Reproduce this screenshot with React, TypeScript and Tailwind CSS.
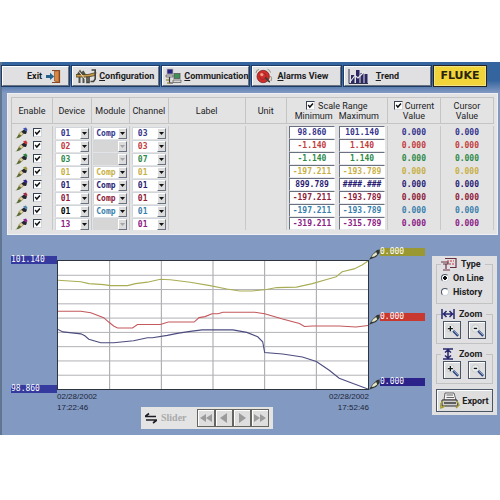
import { useState } from "react";
import type { ReactNode } from "react";

type Channel = {
  device: string;
  module: string;
  channel: string;
  min: string;
  max: string;
  text: string;
  deviceText?: string;
  brush: string;
};

const CHANNELS: Channel[] = [
  { device: "01", module: "Comp", channel: "03", min: "98.860", max: "101.140", text: "text-[#34348c]", brush: "#3c50b0" },
  { device: "02", module: "", channel: "03", min: "-1.140", max: "1.140", text: "text-[#c23c3c]", brush: "#d02c2c" },
  { device: "03", module: "", channel: "07", min: "-1.140", max: "1.140", text: "text-[#2e8a48]", brush: "#2c8040" },
  { device: "01", module: "Comp", channel: "01", min: "-197.211", max: "-193.789", text: "text-[#c8b044]", brush: "#98983c" },
  { device: "01", module: "Comp", channel: "01", min: "899.789", max: "####.###", text: "text-[#2a1c74]", brush: "#30208c" },
  { device: "01", module: "Comp", channel: "01", min: "-197.211", max: "-193.789", text: "text-[#8e2038]", brush: "#a02840" },
  { device: "01", module: "Comp", channel: "01", min: "-197.211", max: "-193.789", text: "text-[#3a80ac]", deviceText: "text-black", brush: "#5088b0" },
  { device: "13", module: "", channel: "01", min: "-319.211", max: "-315.789", text: "text-[#8a2084]", brush: "#902090" },
];

const TRACES = [
  {
    color: "#a9ad55",
    points:
      "0,19.5 23,21 31,23 46,24 53,25 70,25 78,23 90,21.5 103,18.5 113,19 133,21.5 153,25 170,28.5 183,30.5 195,30.5 210,29 220,27 240,26.5 256,23 273,18 280,16 286,11 298,8 306,4 312,0",
  },
  {
    color: "#c4585c",
    points:
      "0,51 23,51 33,52.5 46,57.5 51,62 56,66 60,68 75,68 80,64.5 103,64.5 111,62 137,62 142,57.5 148,56.5 155,53.5 161,53.5 166,52 198,52 208,53.5 226,59 243,63.5 248,66.5 256,66 283,66 300,67 312,65.5",
  },
  {
    color: "#4c4c80",
    points:
      "0,69.5 5,72 14,73 23,74 27,76 31,79.5 43,83 56,83 76,81 90,78 95,78 110,75.5 120,73.5 133,71.5 145,70 176,70 190,72.5 201,77 206,82 208,93 226,94.5 246,97.5 260,102 273,111 283,119 297,124.5 312,130",
  },
];

const TAGS = [
  { value: "0.000", bg: "bg-[#9a9832]" },
  { value: "0.000", bg: "bg-[#c8382f]" },
  { value: "0.000", bg: "bg-[#2b2389]" },
];

function Tick({ label }: { label: string }) {
  const [checked, setChecked] = useState(true);
  return (
    <span className="relative inline-block h-[9px] w-[9px] shrink-0">
      <input
        type="checkbox"
        aria-label={label}
        checked={checked}
        onChange={(e) => setChecked(e.target.checked)}
        className="block h-[9px] w-[9px] appearance-none border border-r-gray-300 border-b-gray-300 border-t-gray-700 border-l-gray-700 bg-white"
      />
      {checked && (
        <svg viewBox="0 0 8 8" className="pointer-events-none absolute inset-0 h-[9px] w-[9px]">
          <path d="M2 3.6 3.4 5.4 6.2 2.2" fill="none" stroke="#111" strokeWidth="1.3" />
        </svg>
      )}
    </span>
  );
}

function Drop({ value, label, text }: { value: string; label: string; text: string }) {
  const off = value === "";
  return (
    <div className={`relative mx-auto h-3 w-[34px] border-t border-l border-gray-300 ${off ? "bg-[#d6d6d6]" : "bg-white"}`}>
      <select
        aria-label={label}
        disabled={off}
        defaultValue={value}
        className={`block h-full w-full appearance-none font-['DejaVu_Sans_Mono',monospace] text-[8px] leading-[11px] font-bold ${text} ${value.length > 2 ? "pl-[2px]" : "pl-[5px]"}`}
      >
        <option value={value}>{value}</option>
      </select>
      <span className="pointer-events-none absolute top-0 right-0 flex h-[11px] w-[9px] items-center justify-center border border-t-white border-l-white border-r-gray-500 border-b-gray-500 bg-[#dcdcdc]">
        <svg viewBox="0 0 5 3" className="h-[3px] w-[5px]">
          <path d="M0 0H5L2.5 3Z" fill={off ? "#a5a5a5" : "#111"} />
        </svg>
      </span>
    </div>
  );
}

function Brush({ color }: { color: string }) {
  return (
    <svg viewBox="0 0 13 12" className="h-3 w-[13px] shrink-0">
      <path d="M0 11.2C3 11 2 8.6 4.2 7L6.6 8.6C5 10.8 3 11.8 0 11.2Z" fill="#5b6a30" />
      <path d="M3.6 7 6.2 4.6 8.4 6.6 6.6 8.8Z" fill="#e0cf92" stroke="#6b6434" strokeWidth=".5" />
      <path d="M6.4 4.4 9 2.4 12 4.4 11 7 8.6 6.8Z" fill="#23262e" />
      <path d="M8 1.6 11 .4 12.6 3 11 4.6Z" fill={color} />
    </svg>
  );
}

function Pointer() {
  return (
    <svg viewBox="0 0 11 12" className="h-3 w-[11px] shrink-0">
      <path d="M0 11.8 3 7 8 2 10.8 1.4 10.6 5 7 9Z" fill="#33362f" />
      <path d="M2.4 9 4 6.4 7.2 4 8.2 6.4 5.4 8.6Z" fill="#e9ebc8" />
    </svg>
  );
}

function ToolButton({ icon, first, rest, className }: { icon: ReactNode; first: string; rest: string; className: string }) {
  return (
    <button
      className={`flex h-5 items-center whitespace-nowrap border border-t-white border-l-white border-r-gray-500 border-b-gray-500 bg-[#e0e0e2] text-[9px] leading-[12px] font-bold text-[#1c1c1c] outline outline-[#1d3c66] ${className}`}
    >
      {icon}
      <span>
        <span className="underline">{first}</span>
        {rest}
      </span>
    </button>
  );
}

function ExitIcon() {
  return (
    <svg viewBox="0 0 15 15" className="h-[15px] w-[15px]">
      <path d="M6 1.5H13.5V13.5H6" fill="none" stroke="#8b4a24" strokeWidth="1.2" />
      <path d="M8.5 2.2 13 1.5V13.5L8.5 12Z" fill="#d98742" stroke="#70401f" strokeWidth=".6" />
      <path d="M0 6H4V3.8L8.2 7.4 4 11V9H0Z" fill="#26648e" />
    </svg>
  );
}

function ConfigIcon() {
  return (
    <svg viewBox="0 0 21 16" className="h-4 w-[21px] shrink-0">
      <path d="M1 6 4 1.5 5.5 4 7.5 2.5 10 6.5H8.5V15H6.5V9H4.5V15H2.5V7Z" fill="#50504a" />
      <path d="M0 6.5H12L20 4.5 19 7.5 12 9H0Z" fill="#c69a48" stroke="#4c3c22" strokeWidth=".8" />
      <path d="M11 8.5V14.5H13V8.5M15.5 2H19.2V11L17.5 13.5H14.5" fill="none" stroke="#44423c" strokeWidth="1.6" />
      <path d="M3 3.5 9 11" stroke="#ebe4cc" strokeWidth="1" />
    </svg>
  );
}

function CommIcon() {
  return (
    <svg viewBox="0 0 17 17" className="h-[17px] w-[17px] shrink-0">
      <rect x="2" y="1" width="6" height="5" fill="#28257e" stroke="#b8b8b8" strokeWidth=".7" />
      <rect x="9" y="5.5" width="6" height="5" fill="#3c9256" stroke="#565656" strokeWidth=".8" />
      <path d="M1 7H8V9H1ZM8 12H16V14.5H8Z" fill="#d8d8d8" stroke="#555" strokeWidth=".7" />
      <path d="M4.5 9V15H8" fill="none" stroke="#3a3a3a" strokeWidth="1.2" />
      <path d="M1 12H4M2 15H4.5" stroke="#9c964c" strokeWidth="1.4" />
    </svg>
  );
}

function AlarmIcon() {
  return (
    <svg viewBox="0 0 18 17" className="h-[17px] w-[18px] shrink-0">
      <circle cx="8.2" cy="8.5" r="6.2" fill="#cf2e2b" stroke="#741a1a" strokeWidth=".7" />
      <circle cx="8" cy="8.3" r="3.2" fill="none" stroke="#8e1f1f" strokeWidth=".6" />
      <circle cx="6.8" cy="6.6" r="1.7" fill="#ee9b88" />
      <path d="M10 10C13 10 12 14 15 13.5" fill="none" stroke="#3f3f3f" strokeWidth="1.8" />
      <path d="M1 5Q1 2 4 1.5M12.5 1.2Q15 2 15.5 4.5M15.5 8Q17.5 10 16 13" fill="none" stroke="#807755" strokeWidth=".8" />
    </svg>
  );
}

function TrendIcon() {
  return (
    <svg viewBox="0 0 20 15" className="h-[15px] w-5 shrink-0">
      <path d="M1 0V14.5H20" fill="none" stroke="#333150" strokeWidth="1" />
      <path d="M3 6H6.5V14H3ZM8 1H11.5V14H8ZM12.5 4H15.5V14H12.5ZM16.5 5H19.5V14H16.5Z" fill="#2b2760" />
      <path d="M2 13 7 6.5 10 9 17 2" fill="none" stroke="#e6e6f0" strokeWidth="1.2" />
    </svg>
  );
}

function Magnifier({ plus }: { plus?: boolean }) {
  return (
    <svg viewBox="0 0 16 16" className="h-[15px] w-[15px]">
      <circle cx="5.8" cy="5.8" r="4" fill="#e9ecec" stroke="#c0c4c4" strokeWidth=".8" />
      <path d="M8.8 8.4 14 13.8" stroke="#2f467e" strokeWidth="2.6" />
      <path d="M9 8 14 13" stroke="#9db4da" strokeWidth=".9" />
      <path d={plus ? "M3 6H8.4M5.7 3.3V8.7" : "M4 5.8H7.6"} stroke="#181818" strokeWidth="1.4" />
    </svg>
  );
}

function Group({ title, icon, children }: { title: string; icon: ReactNode; children: ReactNode }) {
  return (
    <fieldset className="min-w-0 border border-[#c2c2c2] px-1 pb-1">
      <legend className="flex h-[14px] items-center gap-1 pr-1 text-[9px] leading-[14px] font-bold">
        {icon}
        {title}
      </legend>
      {children}
    </fieldset>
  );
}

function ZoomPair({ axis }: { axis: string }) {
  const cls = "flex h-[18px] w-[18px] items-center justify-center border border-gray-600 bg-[#dedede] shadow-[inset_1px_1px_0_#fff]";
  return (
    <div className="flex justify-between px-[2px]">
      <button className={cls} aria-label={`Zoom in ${axis}`}>
        <Magnifier plus />
      </button>
      <button className={cls} aria-label={`Zoom out ${axis}`}>
        <Magnifier />
      </button>
    </div>
  );
}

const SEEK = [
  { name: "First", d: "M7 1V9L1 5ZM13 1V9L7 5Z" },
  { name: "Previous", d: "M10 0V10L3 5Z" },
  { name: "Next", d: "M4 0V10L11 5Z" },
  { name: "Last", d: "M1 1V9L7 5ZM7 1V9L13 5Z" },
];

export default function App() {
  const [mode, setMode] = useState("On Line");
  const head = "border-r border-b border-[#c4c4c4] p-0 font-normal";
  const cell = "h-[13px] border-r border-[#c8c8c8] p-0";
  const mono = "font-['DejaVu_Sans_Mono',monospace] text-[8px] font-bold";

  return (
    <div className="min-h-screen bg-white pt-[62px] font-[Roboto,'Liberation_Sans',sans-serif] text-[#222]">
      <div className="border-l-2 border-[#5f7590] bg-[#829ac2] pb-[6px]">
        {/* Toolbar */}
        <nav className="grid h-[31px] grid-cols-[67fr_87fr_86fr_88fr_87fr_52fr_11px] gap-x-[3px] bg-linear-to-b from-[#35659f] from-60% to-[#829ac2] pt-1">
          <ToolButton icon={<ExitIcon />} first="E" rest="xit" className="flex-row-reverse justify-end gap-1 pl-6 [&_span]:no-underline" />
          <ToolButton icon={<ConfigIcon />} first="C" rest="onfiguration" className="gap-[2px] pl-[3px]" />
          <ToolButton icon={<CommIcon />} first="C" rest="ommunication" className="gap-[2px] pl-[2px]" />
          <ToolButton icon={<AlarmIcon />} first="A" rest="larms View" className="gap-1 pl-[2px]" />
          <ToolButton icon={<TrendIcon />} first="T" rest="rend" className="gap-2 pl-[3px]" />
          <div className="flex h-5 items-center justify-center border border-[#efe488] bg-[#f0d43a] font-['DejaVu_Sans',sans-serif] text-[11px] leading-[12px] font-bold text-[#29230c] outline outline-[#29231c]">
            FLUKE
          </div>
        </nav>

        {/* Channel table */}
        <div className="mr-[2px] ml-[5px] border border-[#eef0f4] bg-[#e3e3e4] px-[3px] pt-[3px] pb-1">
          <table className="w-full table-fixed border-separate border-spacing-0 border-t border-l border-[#c4c4c4] text-center text-[9px] leading-[10px]">
            <colgroup>
              <col className="w-[8.5%]" />
              <col className="w-[8%]" />
              <col className="w-[8%]" />
              <col className="w-[8%]" />
              <col className="w-[16%]" />
              <col className="w-[8.5%]" />
              <col className="w-[10.5%]" />
              <col className="w-[10.5%]" />
              <col className="w-[11%]" />
              <col className="w-[11%]" />
            </colgroup>
            <thead>
              <tr className="h-[26px]">
                {["Enable", "Device", "Module", "Channel", "Label", "Unit"].map((name) => (
                  <th key={name} className={head}>{name}</th>
                ))}
                <th colSpan={2} className={head}>
                  <div className="flex items-center justify-center gap-[3px]">
                    <Tick label="Scale Range" />
                    Scale Range
                  </div>
                  <div className="flex justify-between px-2">
                    <span>Minimum</span>
                    <span>Maximum</span>
                  </div>
                </th>
                <th className={head}>
                  <div className="flex items-center justify-center gap-[2px]">
                    <Tick label="Current Value" />
                    Current
                  </div>
                  Value
                </th>
                <th className={head}>
                  Cursor
                  <br />
                  Value
                </th>
              </tr>
            </thead>
            <tbody>
              <tr aria-hidden="true">
                <td colSpan={10} className="h-[2px] p-0"></td>
              </tr>
              {CHANNELS.map((c, i) => (
                <tr key={i}>
                  <td className={cell}>
                    <div className="flex h-[13px] items-center gap-[5px] pl-[3px]">
                      <Brush color={c.brush} />
                      <Tick label={`Enable row ${i + 1}`} />
                    </div>
                  </td>
                  <td className={cell}>
                    <Drop value={c.device} label={`Device ${i + 1}`} text={c.deviceText || c.text} />
                  </td>
                  <td className={cell}>
                    <Drop value={c.module} label={`Module ${i + 1}`} text={c.text} />
                  </td>
                  <td className={cell}>
                    <Drop value={c.channel} label={`Channel ${i + 1}`} text={c.text} />
                  </td>
                  <td className={cell}></td>
                  <td className={cell}></td>
                  {[c.min, c.max].map((v, k) => (
                    <td key={k} className={`h-[13px] p-0 ${k ? "border-r border-[#c8c8c8]" : ""}`}>
                      <input
                        aria-label={`${k ? "Maximum" : "Minimum"} ${i + 1}`}
                        defaultValue={v}
                        className={`mx-auto block h-[13px] w-[46px] border border-t-gray-500 border-l-gray-500 border-r-white border-b-gray-200 bg-white text-center ${mono} ${c.text}`}
                      />
                    </td>
                  ))}
                  <td className={`${cell} ${mono} ${c.text}`}>0.000</td>
                  <td className={`${cell} ${mono} ${c.text}`}>0.000</td>
                </tr>
              ))}
            </tbody>
          </table>
        </div>

        {/* Trend area */}
        <div className="flex gap-[7px] pt-[13px] pr-[3px] pl-[9px]">
          <div className="flex min-w-0 flex-1 items-start">
            <div className="mt-2 flex h-[137px] w-[46px] shrink-0 flex-col justify-between font-['DejaVu_Sans_Mono',monospace] text-[8px] leading-[8px] text-white">
              <span className="bg-[#353a9e]">101.140</span>
              <span className="bg-[#353a9e]">98.860</span>
            </div>
            <div className="min-w-0 flex-1 pt-3">
              <svg viewBox="0 0 312 130" preserveAspectRatio="none" className="block h-[130px] w-full border border-[#2e3340] bg-white">
                {[52, 104, 156, 208, 260].map((x) => (
                  <line key={x} x1={x} x2={x} y1="0" y2="130" stroke="#a3a3a8" vectorEffect="non-scaling-stroke" />
                ))}
                {[1, 2, 3, 4, 5, 6, 7, 8].map((n) => (
                  <line key={n} x1="0" x2="312" y1={n * 14.5} y2={n * 14.5} stroke="#b1b1b6" vectorEffect="non-scaling-stroke" />
                ))}
                {TRACES.map((t) => (
                  <polyline key={t.color} points={t.points} fill="none" stroke={t.color} strokeWidth="1.1" vectorEffect="non-scaling-stroke" />
                ))}
              </svg>
              <div className="flex justify-between pt-[1px] font-['Liberation_Sans',Arial,sans-serif] text-[8px] leading-[11px] text-[#1b2438]">
                <div>
                  02/28/2002
                  <br />
                  17:22:46
                </div>
                <div className="mt-4 mr-3 flex h-[22px] items-center gap-1 bg-[#e4e4e5] px-1">
                  <svg viewBox="0 0 12 12" className="h-3 w-3">
                    <path d="M0 4.5H11M0 4.5 4 1.5M1 8H12M12 8 8 11" fill="none" stroke="#1c1c24" strokeWidth="1.6" />
                  </svg>
                  <span className="w-8 font-['Liberation_Serif',serif] text-[10px] leading-[12px] font-bold text-[#aaa]">Slider</span>
                  <div className="flex">
                    {SEEK.map((s) => (
                      <button key={s.name} aria-label={s.name} className="flex h-[18px] w-[18px] items-center justify-center border border-[#65655f] bg-[#dedede] shadow-[inset_1px_1px_0_#fff]">
                        <svg viewBox="0 0 14 10" className="h-[10px] w-[14px]">
                          <path d={s.d} fill="#9b9b9b" />
                        </svg>
                      </button>
                    ))}
                  </div>
                </div>
                <div className="text-right">
                  02/28/2002
                  <br />
                  17:52:46
                </div>
              </div>
            </div>
            <div className="flex h-[142px] w-14 shrink-0 flex-col justify-between">
              {TAGS.map((t) => (
                <div key={t.bg} className="flex items-start">
                  <Pointer />
                  <span className={`flex-1 font-['DejaVu_Sans_Mono',monospace] text-[8px] leading-[8px] text-white ${t.bg}`}>{t.value}</span>
                </div>
              ))}
            </div>
          </div>

          {/* Side panel */}
          <aside className="mt-2 flex w-[65px] shrink-0 flex-col gap-[3px] self-start bg-[#e0e0e2] px-1 pt-[1px] pb-[3px]">
            <Group
              title="Type"
              icon={
                <svg viewBox="0 0 16 14" className="h-[14px] w-4">
                  <path d="M4 1.5H15V10.5H9M0 5H7V7H2M5 7V12M2 13H9" fill="none" stroke="#6a3042" strokeWidth="1.2" />
                  <path d="M6 4H13M8 7H13" stroke="#c23a40" strokeWidth="1.2" strokeDasharray="2 1" />
                </svg>
              }
            >
              {["On Line", "History"].map((m) => (
                <label key={m} className="flex h-[14px] items-center gap-1 text-[9px] leading-[14px] font-bold whitespace-nowrap">
                  <input
                    type="radio"
                    name="mode"
                    checked={mode === m}
                    onChange={() => setMode(m)}
                    className="h-2 w-2 shrink-0 appearance-none rounded-full border border-t-gray-600 border-l-gray-600 border-r-gray-300 border-b-gray-300 bg-white checked:bg-[radial-gradient(#111_38%,#fff_46%)]"
                  />
                  {m}
                </label>
              ))}
            </Group>
            <Group
              title="Zoom"
              icon={
                <svg viewBox="0 0 14 10" className="h-[10px] w-[14px]">
                  <path d="M1 0V10M13 0V10M2 5H12M5.5 2 2.5 5 5.5 8M8.5 2 11.5 5 8.5 8" fill="none" stroke="#26266e" strokeWidth="1.5" />
                </svg>
              }
            >
              <ZoomPair axis="horizontal" />
            </Group>
            <Group
              title="Zoom"
              icon={
                <svg viewBox="0 0 14 12" className="h-3 w-[14px]">
                  <path d="M2 1H12M2 11H12M7 2V10M4 4.5 7 2 10 4.5M4 7.5 7 10 10 7.5" fill="none" stroke="#26266e" strokeWidth="1.5" />
                </svg>
              }
            >
              <ZoomPair axis="vertical" />
            </Group>
            <button className="mt-[2px] flex h-[23px] items-center justify-center gap-[2px] border border-gray-600 bg-[#dedede] text-[9px] leading-[12px] font-bold shadow-[inset_1px_1px_0_#fff]">
              <svg viewBox="0 0 20 17" className="h-[17px] w-5">
                <path d="M5 1H14L16 8H4Z" fill="#f3f3f3" stroke="#444" strokeWidth=".8" />
                <path d="M6.5 3H13M6.5 5.5H14" stroke="#555" strokeWidth=".9" />
                <path d="M2 8H17L18 14H2Z" fill="#cfcfcf" stroke="#2b2b2b" strokeWidth="1" />
                <path d="M4 11H16" stroke="#222" strokeWidth="1.3" />
                <path d="M3 9Q0 11 1 16L5 14M17 9 19 13 16 16" fill="none" stroke="#a69c30" strokeWidth="1.4" />
              </svg>
              Export
            </button>
          </aside>
        </div>
      </div>
    </div>
  );
}
